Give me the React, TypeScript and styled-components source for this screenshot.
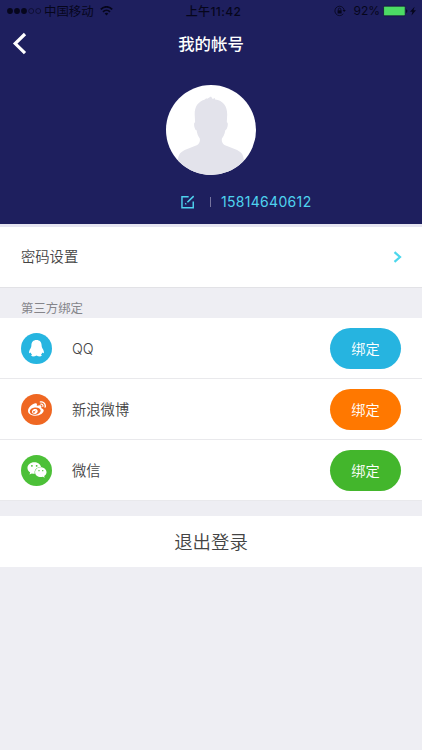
import React from 'react';
import styled, { createGlobalStyle } from 'styled-components';
import { FaWeibo, FaWeixin } from 'react-icons/fa';

const GlobalStyle = createGlobalStyle`
  * { box-sizing: border-box; }
  body {
    margin: 0;
    background: #eeeef3;
    font-family: Inter, "Noto Sans CJK SC", sans-serif;
    color: #444;
  }
  button { font-family: inherit; border: 0; padding: 0; cursor: pointer; }
`;

const Page = styled.main`
  width: 100%;
  height: 750px;
  overflow: hidden;
  background: #eeeef3;
`;

const Header = styled.header`
  height: 224px;
  background: #1e1f5e;
  display: flex;
  flex-direction: column;
  align-items: center;
`;

const StatusBar = styled.div`
  width: 100%;
  height: 22px;
  padding: 0 5px 2px 7px;
  display: grid;
  grid-template-columns: 1fr auto 1fr;
  align-items: center;
  font-size: 12px;
  line-height: 20px;
  color: #06061c;
`;

const StatusGroup = styled.div<{ $end?: boolean }>`
  display: flex;
  align-items: center;
  justify-content: ${(p) => (p.$end ? 'flex-end' : 'flex-start')};
  white-space: nowrap;
`;

const Carrier = styled.span`
  margin: 0 6px 0 2px;
  font-size: 12.4px;
  line-height: 20px;
  padding-top: 2px;
`;

const Clock = styled.span`
  padding: 1px 0 0 3px;
  font-weight: 500;
  font-size: 12px;
  letter-spacing: 0.4px;
`;

const Percent = styled.span`
  margin: 0 3px 0 7px;
  font-size: 12px;
`;

const NavBar = styled.nav`
  width: 100%;
  height: 43px;
  padding: 0 12px;
  display: grid;
  grid-template-columns: 60px 1fr 60px;
  align-items: center;
`;

const BackButton = styled.button`
  width: 16px;
  height: 24px;
  background: none;
  display: flex;
`;

const Title = styled.h1`
  margin: 0;
  text-align: center;
  font-size: 16.4px;
  line-height: 24px;
  font-weight: 500;
  color: #fff;
`;

const Avatar = styled.div`
  width: 90px;
  height: 90px;
  margin-top: 20px;
  border-radius: 50%;
  overflow: hidden;
  background: #fff;
`;

const PhoneRow = styled.div`
  width: 131px;
  height: 20px;
  margin: 17px 0 0 70px;
  display: flex;
  align-items: center;
  color: #4fd3ef;
`;

const PhoneDivider = styled.span`
  flex-shrink: 0;
  width: 1px;
  height: 10px;
  margin: 0 10px 0 16px;
  background: #77749f;
`;

const Phone = styled.span`
  font-size: 14px;
  line-height: 20px;
  letter-spacing: 0.32px;
`;

const SettingRow = styled.section`
  height: 64px;
  padding: 0 20px 0 21px;
  border-top: 3px solid #e6e5f1;
  border-bottom: 1px solid #e2e2e6;
  background: #fff;
  display: flex;
  align-items: center;
  justify-content: space-between;
  font-size: 14.3px;
`;

const SettingName = styled.span`
  line-height: 20px;
  font-weight: 350;
`;

const SectionLabel = styled.h2`
  height: 30px;
  margin: 0;
  padding: 7px 21px 0;
  font-size: 12.4px;
  line-height: 28px;
  font-weight: 400;
  color: #85858a;
`;

const AccountList = styled.ul`
  margin: 0;
  padding: 0;
  list-style: none;
  background: #fff;
`;

const AccountRow = styled.li`
  height: 61px;
  padding: 0 21px;
  display: flex;
  align-items: center;
  border-bottom: 1px solid #e9e9ec;
`;

const Logo = styled.span<{ $color: string }>`
  width: 31px;
  height: 31px;
  border-radius: 50%;
  background: ${(p) => p.$color};
  color: #fff;
  display: flex;
  align-items: center;
  justify-content: center;
`;

const AccountName = styled.span`
  flex: 1;
  padding-top: 2px;
  margin-left: 20px;
  font-size: 14.3px;
  line-height: 22px;
  font-weight: 350;
`;

const BindButton = styled.button<{ $color: string }>`
  width: 71px;
  height: 41px;
  border-radius: 21px;
  background: ${(p) => p.$color};
  color: #fff;
  font-size: 14.2px;
  line-height: 41px;
  font-weight: 350;
`;

const LogoutButton = styled.button`
  width: 100%;
  height: 51px;
  margin-top: 15px;
  padding-top: 2px;
  background: #fff;
  color: #444;
  font-size: 18.4px;
  line-height: 49px;
  font-weight: 350;
  display: block;
`;

const Signal = () => (
  <svg width="35" height="8" viewBox="0 0 35 8">
    {[3, 10, 17].map((x) => <circle key={x} cx={x} cy="4" r="2.9" fill="#06061c" />)}
    {[24.2, 31.2].map((x) => (
      <circle key={x} cx={x} cy="4" r="2.5" fill="none" stroke="#06061c" strokeWidth=".6" />
    ))}
  </svg>
);

const Wifi = () => (
  <svg width="13" height="10" viewBox="0 0 13 10" fill="none" stroke="#06061c" strokeWidth="1.7">
    <path d="M.8 3.4C4-.1 9-.1 12.2 3.4M3 5.8c2-2 5-2 7 0" />
    <path d="M4.7 7.4c1-1 2.6-1 3.6 0L6.5 9.4z" fill="#06061c" stroke="none" />
  </svg>
);

const RotationLock = () => (
  <svg width="12" height="12" viewBox="0 0 12 12" fill="none" stroke="#06061c">
    <path d="M9.3 8.8A4.7 4.7 0 1 1 10.2 5" strokeWidth=".8" />
    <path d="M8.6 5h3.2l-1.6 2.1z" fill="#06061c" stroke="none" />
    <path d="M3.6 5.3h4v3.2h-4z" fill="#06061c" stroke="none" />
    <path d="M4.4 5.4V4.3a1.2 1.2 0 0 1 2.4 0v1.1" strokeWidth=".8" />
  </svg>
);

const Battery = () => (
  <svg width="34" height="12" viewBox="0 0 34 12">
    <rect x=".6" y="1.2" width="21.6" height="9.6" rx="1" fill="#4cdb65" stroke="#10102f" strokeWidth=".7" />
    <path d="M23.2 4.3c1.6.4 1.6 3.2 0 3.6z" fill="#06061c" />
    <path d="M31.6 1.8L27 6.8h2.4L28.5 10.6 33 5.3h-2.5z" fill="#06061c" />
  </svg>
);

const Silhouette = () => (
  <svg width="90" height="90" viewBox="0 0 90 90">
    <path
      fill="#e3e3eb"
      d="M45 11.5l1.7 2.6 2.2-1.1.2 1.5C57 15.5 61.3 21 61.2 29.5l-.4 7.8c1.2.1 1.2 2.2.7 4.2-.4 1.8-1.2 3.5-2.2 3.7-.6 4-2 6.3-3.4 8.2-.6 4 1.3 6.2 5.1 7.6l8.2 3.2c5.2 2.1 8.3 4.300 8.600 10.800V90H12V75c.3-6.500 3.400-8.700 8.600-10.800l8.200-3.200c3.800-1.400 5.600-3.600 5-7.600-1.600-2-2.700-4.400-3.200-8.200-1.300-.2-1.900-2-2.300-3.800-.4-2-.3-4 .8-4.100l-.4-7.800c-.3-7.900 3.600-13 9.700-14.800l2.300-1.700v1.100z"
    />
  </svg>
);

const EditIcon = () => (
  <svg width="14" height="14" viewBox="0 0 14 14" fill="none" stroke="currentColor" strokeWidth="1.5">
    <path d="M8 1.6H1v11.400h11.800V6.400" />
    <path d="M6.700 7.300L13.300.9M4.500 9.400l.9-.9" strokeWidth="1.7" />
  </svg>
);

const Penguin = () => (
  <svg width="17" height="18" viewBox="0 0 17 18" fill="#fff">
    <path d="M8.5 1C5.2 1 3.4 3.2 3.4 6.3c0 1.3-.3 2.2-.9 3.2C1.6 11 .9 12.5 1.1 13.8c.1.8.8.4 1.6-.4.2 1 .7 1.6 1.4 2.2-1.5.7-1 1.8.8 1.8 1.5 0 2.7-.3 3.6-.9.9.6 2.1.9 3.6.9 1.8 0 2.3-1.1.8-1.8.7-.6 1.2-1.2 1.4-2.2.8.8 1.5 1.200 1.600.4.2-1.300-.5-2.800-1.400-4.300-.6-1-.9-1.900-.9-3.200C13.600 3.200 11.800 1 8.500 1z" />
  </svg>
);

const accounts = [
  { name: 'QQ', logo: '#26b5e0', button: '#26b4e0', icon: <Penguin /> },
  { name: '新浪微博', logo: '#ef6722', button: '#ff7800', icon: <FaWeibo size={18} /> },
  { name: '微信', logo: '#4cc038', button: '#43b62c', icon: <FaWeixin size={20} /> },
];

export default function App() {
  return (
    <Page>
      <GlobalStyle />
      <Header>
        <StatusBar>
          <StatusGroup>
            <Signal />
            <Carrier>中国移动</Carrier>
            <Wifi />
          </StatusGroup>
          <Clock>上午11:42</Clock>
          <StatusGroup $end>
            <RotationLock />
            <Percent>92%</Percent>
            <Battery />
          </StatusGroup>
        </StatusBar>
        <NavBar>
          <BackButton aria-label="返回">
            <svg width="16" height="24" viewBox="0 0 16 24" fill="none" stroke="#fff" strokeWidth="3.2">
              <path d="M13 2L3.2 11.6 13 21.2" />
            </svg>
          </BackButton>
          <Title>我的帐号</Title>
        </NavBar>
        <Avatar><Silhouette /></Avatar>
        <PhoneRow>
          <EditIcon />
          <PhoneDivider />
          <Phone>15814640612</Phone>
        </PhoneRow>
      </Header>
      <SettingRow>
        <SettingName>密码设置</SettingName>
        <svg width="9" height="12" viewBox="0 0 9 12" fill="none" stroke="#4cd7ec" strokeWidth="2.2">
          <path d="M1.5 1.2L7 6l-5.5 4.8" />
        </svg>
      </SettingRow>
      <SectionLabel>第三方绑定</SectionLabel>
      <AccountList>
        {accounts.map((a) => (
          <AccountRow key={a.name}>
            <Logo $color={a.logo}>{a.icon}</Logo>
            <AccountName>{a.name}</AccountName>
            <BindButton $color={a.button}>绑定</BindButton>
          </AccountRow>
        ))}
      </AccountList>
      <LogoutButton>退出登录</LogoutButton>
    </Page>
  );
}
